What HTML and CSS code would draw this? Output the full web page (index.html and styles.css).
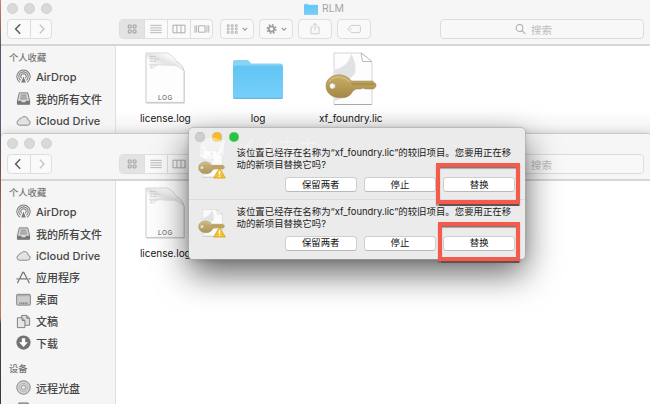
FILE: index.html
```
<!DOCTYPE html>
<html lang="zh-CN">
<head>
<meta charset="utf-8">
<title>RLM</title>
<link rel="stylesheet" href="styles.css">
</head>
<body>
<svg class="defs" width="0" height="0" aria-hidden="true">
  <defs>
    <linearGradient id="folderBlue" x1="0" y1="0" x2="0" y2="1"><stop offset="0" stop-color="#62c5f4"/><stop offset="1" stop-color="#76cffa"/></linearGradient>
    <linearGradient id="keyGold" x1="0" y1="0" x2="0" y2="1"><stop offset="0" stop-color="#c9ae6c"/><stop offset="1" stop-color="#a38845"/></linearGradient>
    <linearGradient id="curl" x1="0" y1="1" x2="1" y2="0"><stop offset="0.3" stop-color="#fff"/><stop offset="0.5" stop-color="#e2e2e2"/><stop offset="0.75" stop-color="#fafafa"/></linearGradient>
    <symbol id="back" viewBox="0 0 22 20"><path d="M12.2 5.2 7.6 10l4.6 4.8" fill="none" stroke="#5e5e5e" stroke-width="1.5"/></symbol>
    <symbol id="fwd" viewBox="0 0 22 20"><path d="m9.2 5.4 4.4 4.6-4.4 4.6" fill="none" stroke="#bdbdbd" stroke-width="1.3"/></symbol>
    <symbol id="grid" viewBox="0 0 24 20"><g fill="none" stroke="#a8a8a8" stroke-width="1.2"><rect x="8.3" y="6" width="2.8" height="2.8" rx=".5"/><rect x="13.2" y="6" width="2.8" height="2.8" rx=".5"/><rect x="8.3" y="11" width="2.8" height="2.8" rx=".5"/><rect x="13.2" y="11" width="2.8" height="2.8" rx=".5"/></g></symbol>
    <symbol id="list" viewBox="0 0 23 20"><path d="M5.5 6.2h12M5.5 8.8h12M5.5 11.3h12M5.5 13.8h12" stroke="#aeaeae" stroke-width=".9"/></symbol>
    <symbol id="cols" viewBox="0 0 23 20"><path d="M5.2 6h12.6v8H5.2zM9.3 6v8M13.6 6v8" fill="none" stroke="#ababab"/></symbol>
    <symbol id="flow" viewBox="0 0 24 20"><path d="M8.3 6.5h7v7h-7zM4.3 6v8M6.2 6v8M17.4 6v8M19.4 6v8" fill="none" stroke="#ababab"/></symbol>
    <symbol id="arrange" viewBox="0 0 34 20"><g fill="none" stroke="#aaa" stroke-width=".9"><path d="M6.2 5.3h2v2h-2zM10.7 5.3h2v2h-2zM15.2 5.3h2v2h-2zM6.2 9h2v2h-2zM10.7 9h2v2h-2zM15.2 9h2v2h-2zM6.2 12.8h2v2h-2zM10.7 12.8h2v2h-2zM15.2 12.8h2v2h-2z"/><path d="m23.3 8.8 2.5 2.5 2.5-2.5" stroke="#979797" stroke-width="1.2"/></g></symbol>
    <symbol id="gear" viewBox="0 0 34 20"><circle cx="12" cy="10" r="3" fill="none" stroke="#9d9d9d" stroke-width="2"/><circle cx="12" cy="10" r="4.7" fill="none" stroke="#9d9d9d" stroke-width="1.8" stroke-dasharray="1.85 1.84"/><path d="m23.3 8.8 2.5 2.5 2.5-2.5" fill="none" stroke="#979797" stroke-width="1.2"/></symbol>
    <symbol id="share" viewBox="0 0 34 20"><path d="M15.2 7.8h-2.7v7.4h9V7.8h-2.7M17 11.5V3.7M14.7 6 17 3.7 19.3 6" fill="none" stroke="#c9c9c9"/></symbol>
    <symbol id="tag" viewBox="0 0 34 20"><path d="m10.2 10 3.7-4h9q1.2 0 1.2 1.2v5.6q0 1.2-1.2 1.2h-9z" fill="none" stroke="#c9c9c9"/><circle cx="13.8" cy="10" r=".7" fill="#c9c9c9"/></symbol>
    <symbol id="search" viewBox="0 0 12 12"><circle cx="4.9" cy="4.9" r="3.7" fill="none" stroke="#aaa" stroke-width="1.1"/><path d="m7.7 7.7 3.6 3.6" stroke="#aaa" stroke-width="1.1"/></symbol>
    <symbol id="folder" viewBox="0 0 50 40"><path d="M0 4Q0 1 2 1h12q1 0 2 1l2 2.500h29q3 0 3 3V38q0 2-2 2H2q-2 0-2-2z" fill="#8bd3f3"/><path d="M0 8.500Q0 6.500 2 6.500h46q2 0 2 2V38q0 2-2 2H2q-2 0-2-2z" fill="url(#folderBlue)"/><path d="M.5 39.300h49" stroke="#58addb" stroke-width=".8"/></symbol>
    <symbol id="page" viewBox="0 0 42 54"><path d="M1.500 1.500h22Q30 5 33 11q6 3 7.500 9v32.500h-39z" fill="#c5c5c5"/><path d="M1 1h22q6 3 9.500 9 6 2 7.500 9.500V51.500H1z" fill="#fdfdfd" stroke="#c9c9c9"/><path d="M1.500 1.500h21.500q6 3 9.500 9 6 2 7.300 9.500C34 14 28 13 20 14.500L5 18z" fill="url(#curl)"/><path d="M5 4.500h6M5 7h9M5 9.500h7M5 14h8M5 16h5" stroke="#bdbdbd" stroke-width=".8" stroke-dasharray="3 .7"/><path d="M4 12.500h28" stroke="#e1e1e1" stroke-width="1.500"/></symbol>
    <symbol id="keydoc" viewBox="0 0 52 54">
      <path d="M9 1h28l10 9.500V52.500H9z" fill="#fdfdfd" stroke="#cacaca" stroke-width=".8"/><path d="M26 1.500q6 10 4 20l-9 9-11-2v-11Q24 14 26 1.500zM10 39l12-9 4 12-16 7z" fill="#e1e2e5"/><path d="M36 1l1.500 8.500H47z" fill="#fff" stroke="#bbb"/><path d="M9 52.500h38" stroke="#aaa"/>
      <path fill-rule="evenodd" d="M11.500 23c6-1 12 2 15 6h21l3.500 3v2.500L48.500 37H40l-2-1-2 1h-5l-3 2-2 3c-3 3.500-8 4.500-14 3.500-7-1-11-6-11-11.500S5 24 11.500 23zM7.500 31a3 3 0 1 0 .1 6 3 3 0 0 0-.1-6z" fill="url(#keyGold)" stroke="#9c8447" stroke-width=".5"/><path d="M27 32h22" stroke="#947c3f" stroke-width=".8"/><path d="M4 30q3-5 10-5 7 1 11 5" fill="none" stroke="#dcc587" stroke-width="1"/>
    </symbol>
    <symbol id="warn" viewBox="0 0 14 13"><path d="M7 1 13.300 12H.7z" fill="#f4c12c" stroke="#d5a11c" stroke-linejoin="round" stroke-width=".8"/><path d="M7 4.200v4.200M7 9.500v1.200" stroke="#fff" stroke-width="1.500"/></symbol>
    <symbol id="airdrop" viewBox="0 0 16 16"><g fill="none" stroke="#7a7a7a" stroke-width="1.100"><path d="M4 14.100a7.100 7.100 0 1 1 8 0"/><path d="M4.900 12a5 5 0 1 1 6.200 0"/><path d="M6.100 10.100a2.900 2.900 0 1 1 3.800 0"/></g><path d="m8 8 2.500 6.500h-5z" fill="#7a7a7a"/></symbol>
    <symbol id="allfiles" viewBox="0 0 16 16"><path d="M3.500 2h9l2 8.500V14h-13v-3.500z" fill="#d8d8d8" stroke="#777"/><path d="M1.300 10.500h3.900l1 1.500h3.600l1-1.500h3.900V14.500H1.300z" fill="#777"/><path d="M5 4.400h6M4.600 6.400h6.800M4.300 8.400h7.400" stroke="#777" stroke-width=".9"/></symbol>
    <symbol id="cloud" viewBox="0 0 16 16"><path d="M3.500 13a2.800 2.800 0 0 1-.3-5.500 2 2 0 0 1 2.500-2A4 4 0 0 1 13 7.500 2.800 2.800 0 0 1 12.500 13z" fill="#e2e2e2" stroke="#858585"/></symbol>
    <symbol id="apps" viewBox="0 0 16 16"><g fill="none" stroke="#777" stroke-width="1.300"><path d="M7.500 2 2.500 12l-1 2M8 2l5 9.500 1.200 2.500M.5 9.500h2.200M4.500 9.500h6.800M13.500 9.500h2M6.700 2.500h2"/></g></symbol>
    <symbol id="desktop" viewBox="0 0 16 16"><rect x=".7" y="2.500" width="14.600" height="11.500" rx=".8" fill="#cdcdcd" stroke="#808080"/><path d="M1 4h14" stroke="#999" stroke-width=".8"/><path d="M3.500 12h9" stroke="#888" stroke-width="2" stroke-dasharray="1.300 .6"/></symbol>
    <symbol id="docs" viewBox="0 0 16 16"><path d="M6 1.500h5.500l3 3V12H6z" fill="#ddd" stroke="#7c7c7c"/><path d="M1.500 4h5l3 3v7.500h-8z" fill="#e7e7e7" stroke="#7c7c7c"/><path d="M6.500 4v3h3M11.500 1.500v3h3" fill="#aaa" stroke="#7c7c7c"/></symbol>
    <symbol id="down" viewBox="0 0 16 16"><circle cx="8" cy="8" r="7.600" fill="#737373"/><path d="M6.200 3.500h3.600v4.300h2.900L8 12.700 3.300 7.800h2.900z" fill="#fff"/></symbol>
    <symbol id="disc" viewBox="0 0 16 16"><circle cx="8" cy="8" r="7.200" fill="#d2d2d2" stroke="#858585"/><circle cx="8" cy="8" r="4.300" fill="none" stroke="#aaa" stroke-width=".7"/><circle cx="8" cy="8" r="2.300" fill="#e8e8e8" stroke="#8d8d8d" stroke-width=".8"/></symbol>
    <symbol id="drive" viewBox="0 0 16 16"><path d="M3 1h10l1.500 9v4h-13v-4z" fill="#aaa" stroke="#777"/></symbol>
  </defs>
</svg>

<div class="desktop">
  <section class="window first">
    <header class="chrome">
      <div class="titlebar"><span class="lights"><i></i><i></i><i></i></span><span class="title"><svg class="title-folder"><use href="#folder"/></svg>RLM</span></div>
      <div class="toolbar">
        <div class="group nav"><svg><use href="#back"/></svg><svg><use href="#fwd"/></svg></div>
        <div class="group views"><svg class="on"><use href="#grid"/></svg><svg><use href="#list"/></svg><svg><use href="#cols"/></svg><svg><use href="#flow"/></svg></div>
        <div class="tools"><svg><use href="#arrange"/></svg><svg><use href="#gear"/></svg><svg><use href="#share"/></svg><svg><use href="#tag"/></svg></div>
        <div class="search"><svg><use href="#search"/></svg>搜索</div>
      </div>
    </header>
    <div class="body">
      <nav class="sidebar">
        <h2>个人收藏</h2>
        <ul>
          <li><svg><use href="#airdrop"/></svg>AirDrop</li>
          <li><svg><use href="#allfiles"/></svg>我的所有文件</li>
          <li><svg><use href="#cloud"/></svg>iCloud Drive</li>
        </ul>
      </nav>
      <main class="files">
        <figure><div class="thumb log"><svg class="page"><use href="#page"/></svg><span class="ext">LOG</span></div><figcaption>license.log</figcaption></figure>
        <figure><div class="thumb"><svg class="folder"><use href="#folder"/></svg></div><figcaption>log</figcaption></figure>
        <figure><div class="thumb"><svg class="keydoc"><use href="#keydoc"/></svg></div><figcaption>xf_foundry.lic</figcaption></figure>
      </main>
    </div>
  </section>

  <section class="window second">
    <header class="chrome">
      <div class="titlebar"><span class="lights"><i></i><i></i><i></i></span></div>
      <div class="toolbar">
        <div class="group nav"><svg><use href="#back"/></svg><svg><use href="#fwd"/></svg></div>
        <div class="group views"><svg class="on"><use href="#grid"/></svg><svg><use href="#list"/></svg><svg><use href="#cols"/></svg><svg><use href="#flow"/></svg></div>
        <div class="tools"><svg><use href="#arrange"/></svg><svg><use href="#gear"/></svg><svg><use href="#share"/></svg><svg><use href="#tag"/></svg></div>
        <div class="search"><svg><use href="#search"/></svg>搜索</div>
      </div>
    </header>
    <div class="body">
      <nav class="sidebar">
        <h2>个人收藏</h2>
        <ul>
          <li><svg><use href="#airdrop"/></svg>AirDrop</li>
          <li><svg><use href="#allfiles"/></svg>我的所有文件</li>
          <li><svg><use href="#cloud"/></svg>iCloud Drive</li>
          <li><svg><use href="#apps"/></svg>应用程序</li>
          <li><svg><use href="#desktop"/></svg>桌面</li>
          <li><svg><use href="#docs"/></svg>文稿</li>
          <li><svg><use href="#down"/></svg>下载</li>
        </ul>
        <h2 class="devices">设备</h2>
        <ul>
          <li><svg><use href="#disc"/></svg>远程光盘</li>
          <li><svg><use href="#drive"/></svg></li>
        </ul>
      </nav>
      <main class="files">
        <figure><div class="thumb log"><svg class="page"><use href="#page"/></svg><span class="ext">LOG</span></div><figcaption>license.log</figcaption></figure>
      </main>
    </div>
  </section>

  <section class="dialog">
    <div class="dialog-lights"><i></i><i class="amber"></i><i class="green"></i></div>
    <div class="request">
      <div class="badge-icon"><svg class="doc"><use href="#keydoc"/></svg><svg class="warn"><use href="#warn"/></svg></div>
      <div class="message">
        <p>该位置已经存在名称为<span class="latin">“xf_foundry.lic”</span>的较旧项目。您要用正在移<br>动的新项目替换它吗<span class="latin">?</span></p>
        <div class="buttons"><button>保留两者</button><button>停止</button><button>替换</button></div>
      </div>
    </div>
    <div class="request lower">
      <div class="badge-icon"><svg class="doc"><use href="#keydoc"/></svg><svg class="warn"><use href="#warn"/></svg></div>
      <div class="message">
        <p>该位置已经存在名称为<span class="latin">“xf_foundry.lic”</span>的较旧项目。您要用正在移<br>动的新项目替换它吗<span class="latin">?</span></p>
        <div class="buttons"><button>保留两者</button><button>停止</button><button>替换</button></div>
      </div>
    </div>
    <svg class="watermark" viewBox="0 0 125 35"><circle cx="17" cy="18" r="12.500" fill="#fff" opacity=".4"/><path d="M8 14q4 10 10 10 8-1 11-16M5 23q13 8 22-5" fill="none" stroke="#fff" stroke-width="2.500" opacity=".6"/><path d="M58 7 44 22M53 12l8 10M78 7 64 22M73 12l8 10M85 10h15M92 6v18M84 16h18M106 11h14M113 6v18" fill="none" stroke="#fff" stroke-width="1.300" opacity=".4"/></svg>
    <div class="mark top"></div>
    <div class="mark bottom"></div>
  </section>
</div>
</body>
</html>
```
FILE: styles.css
```
* { box-sizing: border-box; }
body { margin: 0; font-family: Inter, "Noto Sans CJK SC", sans-serif; }
svg { display: block; flex: none; }
h2, ul, p, figure { margin: 0; padding: 0; }
.defs { position: absolute; }
.desktop {
  position: relative; width: 650px; height: 404px; overflow: hidden;
  background: linear-gradient(#c8836b 0, #9a6a62 25px, #55576a 45px, #5a5f75 133px, #7e5550 165px, #b57961 225px, #c58267 318px, #4a4a52 323px, #3c3c42 404px);
}
.window { position: absolute; left: 1px; width: 650px; background: #fff; overflow: hidden; display: flex; flex-direction: column; }
.first { top: -2px; height: 137px; }
.second { top: 134px; height: 280px; border-radius: 4px 4px 0 0; box-shadow: 0 -1px 0 #c9c9c9, 0 -1px 10px rgba(0,0,0,.16); }
.chrome { height: 48px; flex: none; background: #f6f6f6; border-bottom: 2px solid #d6d6d6; }
.second .chrome { height: 47px; }
.titlebar { height: 21px; display: flex; align-items: center; justify-content: center; position: relative; }
.second .titlebar { height: 20px; }
.lights { position: absolute; left: 6px; top: 5px; display: flex; gap: 6px; }
.second .lights { top: 4px; }
.lights i { width: 11px; height: 11px; border-radius: 50%; background: #d9d9d9; border: 1px solid #cfcfcf; }
.title { display: flex; align-items: center; gap: 4px; color: #a6a6a6; font-size: 10.500px; margin-right: 4px; }
.title-folder { width: 14px; height: 12px; }
.toolbar { display: flex; align-items: center; height: 20px; padding-left: 6px; }
.toolbar svg { height: 20px; }
.group { display: flex; border: 1px solid #dedede; border-radius: 4px; overflow: hidden; background: #fafafa; height: 20px; }
.group svg { margin-top: -1px; border-left: 1px solid #dedede; }
.group svg:first-child { border-left: 0; }
.nav { width: 45px; }
.nav svg { width: 22px; }
.views { width: 94px; margin-left: 67px; }
.views svg { width: 23px; }
.views .on { width: 24px; background: #e3e3e3; }
.tools { display: flex; gap: 5px; margin-left: 7px; }
.tools svg { width: 34px; border: 1px solid #dfdfdf; border-radius: 4px; background: #f9f9f9; }
.search { margin-left: 69px; width: 204px; height: 20px; border: 1px solid #dcdcdc; border-radius: 4px; display: flex; align-items: center; justify-content: center; gap: 5px; padding-right: 17px; color: #bcbcbc; font-size: 10.500px; background: #f8f8f8; }
.toolbar .search svg { width: 11px; height: 12px; }
.body { flex: 1; display: flex; min-height: 0; }
.sidebar { width: 115px; flex: none; background: #f5f5f5; border-right: 1px solid #dfdfdf; padding-top: 5px; }
.sidebar h2 { font-size: 9.300px; line-height: 14px; font-weight: 500; color: #767676; padding-left: 8px; }
.sidebar ul { list-style: none; padding-top: 1px; }
.sidebar li { display: flex; align-items: center; gap: 5px; height: 21.850px; padding-left: 15px; font-size: 11px; font-weight: 500; color: #464646; white-space: nowrap; }
.sidebar li svg { width: 15px; height: 15px; }
.sidebar .devices { margin-top: 8px; }
.files { flex: 1; display: flex; padding-left: 3px; background: linear-gradient(#fff 65px, #f0f0f0 90px); }
.second .files { background: #fff; }
.files figure { width: 92.700px; display: flex; flex-direction: column; align-items: center; }
.thumb { width: 54px; height: 65px; display: flex; align-items: center; justify-content: center; position: relative; }
.page { width: 41px; height: 53px; }
.ext { position: absolute; left: 0; right: 0; bottom: 9px; text-align: center; font-size: 6.500px; line-height: 8px; letter-spacing: .5px; color: #555; }
.folder { width: 50px; height: 40px; }
.keydoc { width: 52px; height: 54px; }
.files figcaption { font-size: 10px; line-height: 14px; color: #151515; white-space: nowrap; }
.dialog {
  position: absolute; left: 189px; top: 128px; width: 336px; height: 131px; border-radius: 4px;
  background: #ebebeb; box-shadow: 0 0 0 .5px #aaa, 0 14px 34px rgba(0,0,0,.62), 0 1px 6px rgba(0,0,0,.15);
}
.dialog-lights { display: flex; gap: 7px; padding: 4px 0 0 6px; height: 15px; }
.dialog-lights i { width: 10px; height: 10px; border-radius: 50%; background: #cecece; box-shadow: inset 0 0 0 .5px #bcbcbc; }
.dialog-lights .amber { background: #fdb924; }
.dialog-lights .green { background: #22c83b; }
.request { display: flex; height: 56px; padding: 4px 10px 0 9px; }
.lower { height: 59px; border-top: 1px solid #dcdcdc; padding-top: 6px; }
.badge-icon { width: 38.500px; position: relative; flex: none; }
.doc { width: 27px; height: 28px; margin-top: 3px; opacity: .85; }
.warn { position: absolute; left: 15px; top: 20px; width: 13px; height: 12px; }
.message p { font-size: 9.420px; line-height: 12px; color: #202020; white-space: nowrap; }
.latin { font-size: 9.400px; }
.buttons { display: flex; gap: 7px; margin: 6px 0 0 48px; }
.lower .buttons { margin-top: 5.500px; }
button { width: 72.300px; height: 15px; padding: 0; border: 1px solid #cfcfcf; border-bottom-color: #b9b9b9; border-radius: 3.500px; background: #fff; font: 9.400px/12px Inter, "Noto Sans CJK SC", sans-serif; color: #111; }
.watermark { position: absolute; left: 6px; top: 4px; width: 125px; height: 35px; }
.mark { position: absolute; border: 4px solid #f45b4d; box-shadow: 0 1.500px 1px #65514f, inset 0 1.500px 1px #806e6c; }
.top { left: 247px; top: 35px; width: 84px; height: 41px; }
.bottom { left: 249px; top: 94px; width: 82px; height: 39px; }
```
